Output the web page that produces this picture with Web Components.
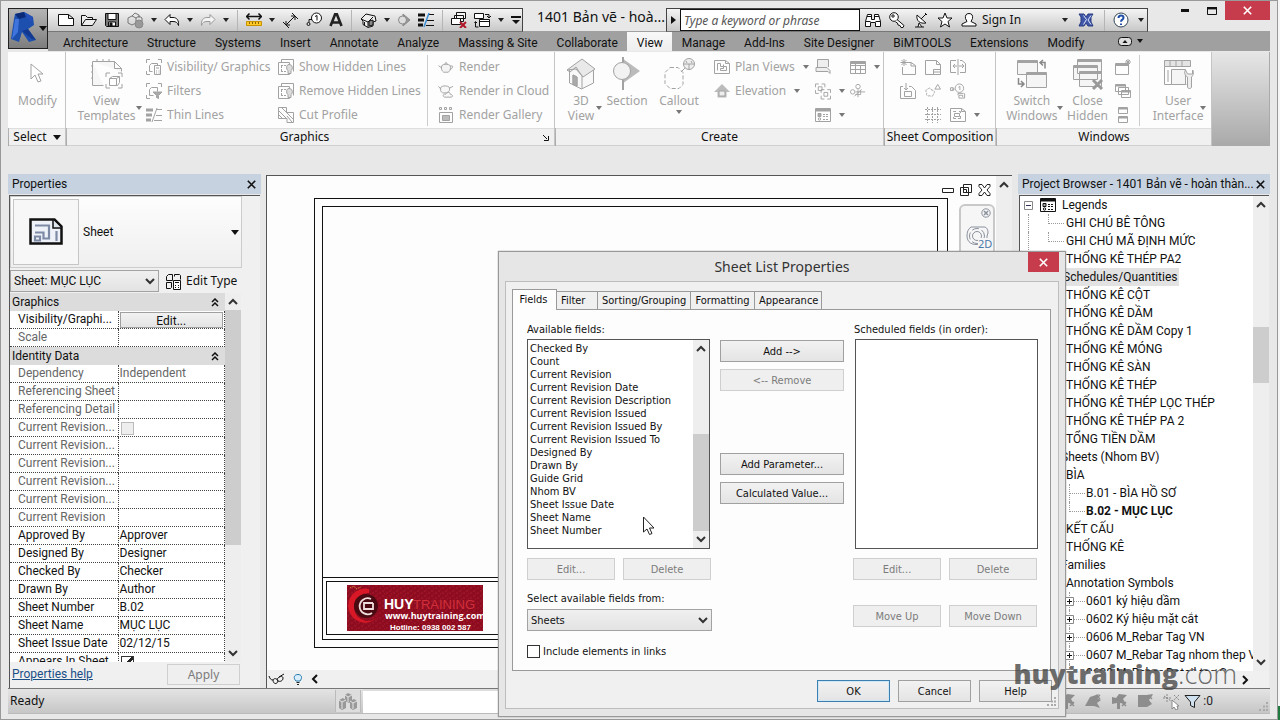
<!DOCTYPE html>
<html lang="vi">
<head>
<meta charset="utf-8">
<title>1401 Bản vẽ - Sheet List Properties</title>
<style>
html,body{margin:0;height:100%;overflow:hidden}
body{font:12px/16px Roboto,"Noto Sans",sans-serif;color:#111;background:#f4f4f4}
</style>
</head>
<body>
<cad-app></cad-app>
<script>
const ICONS = {
  logo:[28,32,'<path d="M4 3l9-2 9 5 1 8-6 4 8 11-7 2-7-10-3 10-8-3 3-20z" fill="#1c4fae" stroke="none"/><path d="M4 3l9-2 2 5-7 2z" fill="#0b2a78" stroke="none"/><path d="M13 1l9 5-2 6-5-6z" fill="#2450b8" stroke="none"/><path d="M4 8l4 0-1 13-6 7z" fill="#3f74dc" stroke="none"/><path d="M11 20l6-2 8 11-4-1z" fill="#12388f" stroke="none"/>'],
  newdoc:[16,16,'<path d="M.5 2.500h10l5 4v7H.5zM10.500 2.500v4h5" fill="#fff"/>'],
  open:[16,16,'<path d="M.5 13.500v-10h4l2 2h5v2M.5 13.500l4-6h11l-4 6z" fill="#eee"/>'],
  save:[16,16,'<path d="M1.500 1.500h13v13h-12l-1-1z" fill="#777"/><path d="M4 1.500h8v6H4z" fill="#fff"/><path d="M4.500 10h7v4h-7z" fill="#fff"/><path d="M6 11h2v3H6z" fill="#111"/>'],
  sync:[17,17,'<path d="M1 6l4-2 4 2v5l-4 2-4-2zM5 4l3-3 4 2 0 3M9 6l3-2 3 2v3M9 11v3" stroke="#777"/><circle cx="12" cy="12" r="4" fill="#999" stroke="#888"/>'],
  undo:[16,14,'<path d="M1 6.500l5-5v3h3c4 0 6 3 5.500 8-1-3-2.500-4-5.500-4H6v3z" fill="#fff"/>'],
  redo:[16,14,'<path d="M15 6.500l-5-5v3H7c-4 0-6 3-5.500 8 1-3 2.500-4 5.500-4h3v3z" fill="#f4f4f4" stroke="#999"/>'],
  measure:[16,14,'<path d="M.5 3.500h15M3.500.5l-3 3 3 3M12.500.5l3 3-3 3" stroke-width="1.500"/><path d="M.5 8.500h15v4H.5z" fill="#ffc928" stroke="#c79200"/><path d="M3.500 9v2M6.500 9v2M9.500 9v2M12.500 9v2" stroke="#8a6400"/>'],
  dim:[17,17,'<path d="M4.500 12.500l8-8M4 9v4h4M9 4h4v4M1 10l6 6M10 1l6 6"/>'],
  tag:[16,16,'<circle cx="10.500" cy="6" r="5" fill="#fff"/><path d="M9 4.500l2-1v5M6 7.500H3v3"/><circle cx="2.500" cy="12" r="1.500"/>'],
  letterA:[14,14,'<path d="M1.500 13L6.200 1h1.600l4.700 12M3.500 9.500h7" stroke="#222" stroke-width="2.600"/>'],
  house:[17,16,'<path d="M1 7l5-5 9 2 1 5-3 1v4l-5 1.500-5-3V9z" fill="#eee"/><path d="M1 7l7 3 5-5M8 10v5M4.500 10v3"/><path d="M9 9l4-1v5l-4 1z" fill="#888"/>'],
  section16:[14,16,'<path d="M6 2l7 6-7 6v-2.500a4 4 0 0 1 0-7z" fill="#999" stroke="#888"/><circle cx="5.500" cy="8" r="4" fill="#ddd" stroke="#888"/>'],
  thin:[16,14,'<path d="M0 2h7M0 7h6M0 12h5" stroke-width="3"/><path d="M10 1.500h6M9 7.500h7M8 12.500h8"/><path d="M11 0L6 14" stroke="#3a8fd6" stroke-width="1.500"/>'],
  thing:[16,14,'<path d="M0 2h7M0 7h6M0 12h5" stroke-width="3"/><path d="M10 1.500h6M10 7.500h6M8 12.500h8M11 0L6 14"/>'],
  closewin:[16,16,'<path d="M5.500.5h9v6h-9zM3.500 3.500h9v6h-9z" fill="#f4f4f4"/><path d="M.5 6.500h9v6h-9z" fill="#fff"/><path d="M9 10l6 6M15 10l-6 6" stroke="#b01827" stroke-width="2"/>'],
  switchwin:[17,17,'<path d="M.5 1.500h9v5h-9zM5.500 7.500h10v7h-10z" fill="#fff"/><path d="M5.500 9.500h10M11 2.500h4v3M13 4l2 2 2-2M1.500 10v5h3M.5 11l1-1.500L3 11"/>'],
  binoc:[16,16,'<path d="M2.500 2.500h4v5h3v-5h4l2 7v5h-5v-4h-5v4h-5v-5zM.5 9.500h5M10.500 9.500h5M2 4.500h5M9 4.500h5" fill="#fff"/>'],
  key:[16,16,'<circle cx="5" cy="5" r="4.300" fill="#fff"/><circle cx="4" cy="4" r="1.200"/><path d="M8 7.500l7 6-1 2h-2l-1-2-2-.5-.5-2-2-1" fill="#fff"/>'],
  dish:[16,16,'<path d="M4 3c-1 6 3 9 9 8zM8 7l5-5M12 1l2 2M2 15h9M5 15l1-4 3 4" fill="#fff"/>'],
  star:[16,16,'<path d="M8 1l2 5h5l-4 3.500 1.500 5.500L8 12l-4.500 3L5 9.500 1 6h5z" fill="#fff"/>'],
  person:[16,16,'<path d="M8 1.500c3 0 4 2 3.500 5l-1.500 3 5 2.500v2H1v-2L6 9.500l-1.500-3C4 3.500 5 1.500 8 1.500z" fill="#fff"/>'],
  xchg:[16,14,'<path d="M1 1h5l2 3 2-3h5l-2 3v5l2 4h-5l-2-3-2 3H1l2-4V4z" fill="#3e55a8" stroke="#283c82"/><path d="M5.500 2.500l3 4-3 5M13 2.500L10 7l3 4.500" stroke="#dfe6ff"/>'],
  help:[16,16,'<circle cx="8" cy="8" r="7" fill="#fff" stroke="#345"/><path d="M5.500 6c0-3.500 5-3.200 5-.3 0 2-2.500 1.800-2.500 4M8 11.500v1.500" stroke="#1f4ea8" stroke-width="2"/>'],
  arrow:[20,24,'<path d="M3 2v15l4-4 3 7 3-1-3-7h5z" fill="#fff"/>'],
  cursor:[13,19,'<path d="M1.500 1v15l3.500-3 2.500 5.500 2.500-1L7.500 12H12z" fill="#fff" stroke="#222"/>'],
  template:[32,32,'<path d="M1.500 3.500h22l7 7v3M1.500 3.500v24h11M23.500 3.500v7h7M6 1v3M12 1v3M18 1v3M0 8h2M0 14h2M0 20h2" fill="#f6f6f6"/><path d="M15 19v-4h4M27 15h4v4M31 26v4h-4M19 30h-4v-4"/><path d="M18.500 20.500l3-2h7v6l-2 3h-8zM18.500 20.500h7v7M25.500 20.500l3-2" fill="#fff"/>'],
  vis:[16,16,'<path d="M.5 4V.5H4M12 .5h3.500V4M.5 12v3.500H4"/><path d="M3.500 6.500l2-2h6v2M3.500 6.500v6h3"/><path d="M8.500 6.500h6v9h-6zM10 9h3M10 12h1M12.500 12h1M10 14h1M12.500 14h1"/>'],
  filter:[16,16,'<path d="M.5 4V.5H4M12 .5h3.500V4M.5 12v3.500H4"/><path d="M3.500 6.500l2-2h6v4M3.500 6.500v6h4"/><path d="M7 9h9l-3.500 3.500v3l-2-1v-2z" fill="#aaa"/>'],
  hidden:[16,16,'<path d="M.5 3.500h11v12H.5zM3.500 3V.5h12v12"/><path d="M3 6.500h6M3 12.500h6M3.500 7v5" stroke-dasharray="2 1"/><path d="M11 5.500c4 0 4 5 2 6v3h-3v-3c-2-1-2-6 1-6z" fill="#ddd"/>'],
  cut:[16,16,'<path d="M.5.5h8v5h7v10H9v-4H.5zM1 4l7 7M1 8l4 4M4 1l5 5M9 6l6 6M9 9l5 6"/>'],
  pot:[17,13,'<path d="M4 4.500c2-2 7-2 9 0 1 3 0 5-2 7H6C4 10 3 8 4 4.500zM4 7L.5 4.500M13 5c3-1 4 1 0 4M7 3l1.500-2L10 3" fill="#f4f4f4"/>'],
  potcloud:[17,15,'<path d="M3 3c2-2 7-2 9 0 1 3 0 4-2 6H5C3 8 2 6 3 3zM3 5L.5 2M12 4l4-2M7 13.500c-3-1-1-4 1-3 1-3 5-3 5 0 3 0 3 3 1 3z" fill="#f8f8f8"/>'],
  gallery:[16,16,'<path d="M1.500.5h2v2h-2zM6.500.5h2v2h-2zM11.500.5h2v2h-2zM1.500 5.500h13v10h-13z"/><path d="M4.500 8.500h7v5h-7z" fill="#bbb"/>'],
  home32:[32,32,'<path d="M4.500 12v13l12 6 12-6V12L18 3z" fill="#f8f8f8"/><path d="M2 12L17 1l13 10-12 8-7-8z" fill="#e9e9e9"/><path d="M2 12l3 2 6-5 6 9v13M8 17l4 2v9l-4-2z"/><path d="M8 17l4 2v9l-4-2z" fill="#aaa"/>'],
  section32:[30,34,'<path d="M10 1l18 13-18 13v-4a9 9 0 0 0 0-17z" fill="#bbb" stroke="none"/><circle cx="10" cy="14" r="8.500" fill="#f2f2f2"/><path d="M11 0v5M11 23v10" stroke-width="2"/>'],
  callout32:[32,34,'<circle cx="26" cy="7" r="5.500" fill="#eee"/><path d="M20.500 7h11M26 7v5M23 4l1 2M28 4l1 2M22 11l-4 4"/><path d="M7 10.500h8l5 5v12l-4 4H7l-5-5v-11z" stroke-dasharray="4 2"/>'],
  plan:[16,14,'<path d="M.5.5h11l4 3v10H.5zM11.500.5v3h4"/><path d="M3.500 10.500v-7h3v3h3v-2M6.500 10.500h6v-4h-3v2h-3z"/>'],
  elev:[16,14,'<path d="M8 0l8 8h-3.500v5.500h-9V8H0z" fill="#bbb" stroke="none"/><path d="M5 7h6v5H5z" fill="#eee"/>'],
  drafting:[16,16,'<path d="M2.500 8V.5h11V8M1 8.500h11l3 3v3l-2-2H1z" fill="#eee"/>'],
  dup:[17,17,'<path d="M.5 4V.5H4M7 .5h3.500V4M.5 7v3.500H4M3.500 3.500h4v4h-4zM6.500 10V6.500H10M13 6.500h3.500V10M6.500 13v3.500H10M16.500 13v3.500H13M9.500 9.500h4v4h-4z"/>'],
  legend:[16,16,'<path d="M.5 1.500h15v13H.5z" fill="#fff"/><path d="M1 3h14" stroke-width="3"/><path d="M3 6.500h3v3H3z" fill="#aaa"/><circle cx="4.500" cy="12" r="1.200"/><path d="M8 7.500h5M8 9.500h5M8 12.500h5" stroke-dasharray="2 1"/>'],
  sched:[16,13,'<path d="M.5.5h15v12H.5zM1 4.500h14M1 8.500h14M5.500 1v11M10.500 5v7"/><path d="M1 2h14" stroke-width="2"/>'],
  scope:[18,16,'<circle cx="9" cy="3" r="2.500"/><circle cx="3" cy="9" r="2.500"/><path d="M9 6v9M6 9h11M6 12h6M12 7v5M5 14l8-8"/>'],
  sheetnew:[16,16,'<path d="M6 3.500h5l4.500 3v9h-13V8M11 3.500v3.500h4.500M4 0v7M.5 3.500h7M1.500 1l5 5M6.500 1l-5 5"/>'],
  titleblk:[16,15,'<path d="M.5.5h11l4 4v10H.5zM11.500.5v4h4M8.500 14V9.500h7M9 12h6"/>'],
  matchl:[16,16,'<path d="M6 1.500H.5v12H6M10 1.500h2l3.500 3v9H10M8 0v16M4 7h3M9 7h4M5 5L3 7l2 2M12 5l2 2-2 2"/>'],
  placev:[16,16,'<path d="M3 3.500H.5v12h15v-8l-4-4H9M4.500 8.500h7v5h-7zM6 0v7M4 5l2 2 2-2"/>'],
  revision:[17,16,'<path d="M3 6c2-2 3-1 4 1 3 0 4 2 2 4 0 3-3 3-4 2-3 1-4-1-3-3-2-2-1-4 1-4z" stroke-dasharray="3 1"/><path d="M13.500 1l3 5h-6z"/>'],
  grid:[16,16,'<path d="M0 2.500h16M0 7.500h16M0 12.500h16M2.500 0v16M7.500 0v16M12.500 0v16" stroke-dasharray="2 1"/>'],
  viewref:[17,17,'<circle cx="10" cy="5" r="4.500"/><path d="M9 4l1.500-1v4M5 6H2M.5 4.500h3v3h-3zM8.500 12.500v-2h6M15.500 10.500v5h-6v-3h4v2"/>'],
  viewport:[16,14,'<path d="M.5.5h11l4 3v10H.5zM11.500.5v3h4"/><path d="M3.500 4v-.5H6M9 3.500h1.500V5M3.500 9v1.500H6M10.500 8v2.500H8M4.500 5.500h5v3h-5z"/>'],
  switch32:[32,32,'<path d="M1.500 2.500h20v14h-20z" fill="#f5f5f5"/><path d="M10.500 14.500h20v15h-20z" fill="#f5f5f5"/><path d="M1.500 4h20M10.500 16h20" stroke-width="2"/><path d="M24 4.500h5v6M27 2l-3 2.500 3 3M2.500 20v6h5M5 23l3 3-3 3" stroke="#888" stroke-width="1.500"/>'],
  close32:[32,32,'<path d="M5.500 1.500h24v14h-24zM1.500 7.500h24v14h-24zM7.500 13.500h22v15h-22z" fill="#f5f5f5"/><path d="M5.500 3h24M1.500 9h24M7.500 15h22" stroke-width="2"/><path d="M21 22l9 9M30 22l-9 9" stroke="#999" stroke-width="3"/>'],
  newwin:[16,16,'<path d="M.5 4.500h13v11H.5z"/><path d="M1 6h12" stroke-width="2"/><path d="M13 0v6M10 3h6M11 1l4 4M15 1l-4 4"/>'],
  cascade:[16,16,'<path d="M.5 1.500h10v7H.5zM3.500 4.500h10v7h-10zM6.500 7.500h9v7h-9z" fill="#fff"/><path d="M1 2.500h9M7 8.500h8" stroke-width="2"/>'],
  tile:[16,16,'<path d="M3.500.5h9v6h-9zM3.500 9.500h9v6h-9z"/><path d="M4 1.500h8M4 10.500h8" stroke-width="2"/>'],
  ui32:[32,32,'<path d="M2.500 2.500h26v6h-26z" fill="#e4e4e4"/><path d="M8 2v6M14 2v6M20 2v6M2.500 8.500v18h22M6 12v12"/><path d="M9.500 11.500h14v15h-14z" fill="#f5f5f5"/><path d="M23.500 12c-2 3 0 6 2 7v10c0 2 4 2 4 0V19c2-2 3-5 1-7v4h-5z" fill="#eee"/>'],
  sheet32:[34,28,'<path d="M1.500 1.500h24l7 7v17h-31z" fill="#eef1f7" stroke="#111" stroke-width="2.500"/><path d="M24 2v8h8" stroke="#111" stroke-width="1.500" fill="#dfe6ee"/><path d="M6 7.500h14v13H14.500v-6H6M6 18.500h5v4H6zM27.500 13v10" stroke="#7d8aa5" stroke-width="2.200"/>'],
  edittype:[17,17,'<path d="M1.500 3.500l2-2h4v6h-6zM9.500 3.500v-2h5l1 1v4M1.500 9.500h5v5l-1 1h-4z"/><path d="M8.500 7.500h7v9h-7z" fill="#fff"/><path d="M10 9.500h4M10 12.500h1M13 12.500h1M10 14.500h1M13 14.500h1"/>'],
  glasses:[17,12,'<path d="M1 3c1 3 2 4 4 4 0 4 4 5 5 1 2 1 5 0 5-3 0-2-3-2-5 0-1 1-1 2 0 3M5 7c1-2 4-2 5 1M11 4l5-3"/>'],
  bulb:[10,14,'<path d="M3 9C0 6 1 2.500 5 2.500S9.500 6 7 9z" fill="#d9efff" stroke="#27a"/><path d="M3.500 10.500h3M4 12.500h2" stroke="#222"/>'],
  wheel:[28,28,'<path d="M6 3h13c3 0 4 3 4 6l-1 3v8h-7C7 22 2 18 2 12c0-4 1-7 4-9z"/><circle cx="12" cy="12" r="4.500"/><circle cx="12" cy="12" r="7.500" stroke-dasharray="7 3"/>'],
  sets:[20,18,'<path d="M1 8l4-2 3 2v8l-4 2-3-2zM7 3l3-2 4 2v6l-3 2-4-2zM12 9l4-2 3 2v7l-4 2-3-2z" fill="#999" stroke="none"/><path d="M1 8l3 2 4-2M7 3l3 2 4-2M12 9l3 2 4-2M4 10v7M10 5v5M15 11v6" stroke="#e4e4e4"/>'],
  funnel:[17,15,'<path d="M1 1.500h15L10.500 8v5.500l-4-2V8z" fill="#cfe0ee"/>'],
  plane:[18,18,'<path d="M1 14l5-9 9-3-2 4 4 2-4 3 3 5-6-2z" fill="#8d8d8d" stroke="none"/><path d="M12 3l4 4M16 3l-4 4" stroke="#8d8d8d" stroke-width="1.500"/>'],
  pin:[18,18,'<path d="M2 5l4 1 3-4 8 1-4 4 3 5-6-1v6h-3v-6l-5 1z" fill="#8d8d8d" stroke="none"/><path d="M12 10l4 4M16 10l-4 4" stroke="#8d8d8d" stroke-width="1.500"/>'],
  face:[18,18,'<path d="M2 3h9l6-1-4 6 3 4-5 3H2z" fill="#8d8d8d" stroke="none"/><path d="M12 3l4 4M16 3l-4 4" stroke="#8d8d8d" stroke-width="1.500"/>'],
  drag:[18,18,'<path d="M1 6h9M5 2v9M2 4l7 5M12 3l5 5M17 3l-5 5" stroke-dasharray="2 1"/><path d="M10 8v9l2-2 2 3 2-1-1-3h2z" fill="#fff"/>'],
  down:[8,5,'<path d="M0 0h8L4 5z" fill="currentColor" stroke="none"/>'],
  small:[6,4,'<path d="M0 0h6L3 4z" fill="currentColor" stroke="none"/>'],
  right:[5,8,'<path d="M0 0v8l5-4z" fill="currentColor" stroke="none"/>'],
  chev:[10,7,'<path d="M1 1l4 4 4-4" stroke-width="2"/>'],
  chevup:[10,7,'<path d="M1 6l4-4 4 4" stroke-width="2"/>'],
  chevl:[7,10,'<path d="M6 1L2 5l4 4" stroke-width="2"/>'],
  chevr:[7,10,'<path d="M1 1l4 4-4 4" stroke-width="2"/>'],
  dbl:[8,9,'<path d="M1 4l3-3 3 3M1 8l3-3 3 3" stroke-width="1.500"/>'],
  x:[9,9,'<path d="M.8.8l7.400 7.400M8.200.8L.8 8.200" stroke-width="1.600"/>'],
  launch:[7,7,'<path d="M1 1l4 4M6.500 2v4.500H2"/>'],
  qat:[10,8,'<path d="M0 1h10" stroke-width="2"/><path d="M1 4h8L5 8z" fill="currentColor" stroke="none"/>'],
  pill:[14,9,'<rect x=".5" y=".5" width="13" height="8" rx="3" fill="#ddd"/><path d="M4.500 6L7 3l2.500 3z" fill="currentColor" stroke="none"/>'],
  min:[12,5,'<path d="M.5.5h11v4H.5z" fill="#fff"/>'],
  restore:[12,12,'<path d="M3.500.5h8v8h-8zM.5 3.500h8v8h-8z" fill="#fff"/><path d="M3.500 5.500h3v3h-3z"/>'],
  closeo:[13,12,'<path d="M1 .5h3L6.500 4 9 .5h3v2L9 6l3 3.500v2H9L6.500 8 4 11.500H1v-2L4 6 1 2.500z" fill="#fff"/>'],
  circx:[10,10,'<circle cx="5" cy="5" r="4.200"/><path d="M3 3l4 4M7 3l-4 4" stroke-width="1.500"/>'],
  max:[10,8,'<path d="M.5 1h9v6.500h-9z"/><path d="M0 1.200h10" stroke-width="2.400"/>'],
  minus:[8,3,'<path d="M0 1.500h8" stroke-width="3"/>'],
  grip:[9,9,'<path d="M7 0h2v2H7zM4 3.500h2v2H4zM7 3.500h2v2H7zM0 7h2v2H0zM4 7h2v2H4zM7 7h2v2H7z" fill="currentColor" stroke="none"/>'],
  plus:[9,9,'<path d="M.5.500h8v8h-8z" fill="#fff" stroke="#888"/><path d="M2 4.500h5M4.500 2v5" stroke="#111"/>'],
  boxminus:[9,9,'<path d="M.5.500h8v8h-8z" fill="#fff" stroke="#888"/><path d="M2 4.500h5" stroke="#335"/>']
};
/* Small base: each element supplies its styles and a markup function. */
function element(name, css, markup){
  customElements.define(name, class extends HTMLElement{
    constructor(){ super(); this.attachShadow({mode:'open'}); }
    connectedCallback(){
      if(this.shadowRoot.firstChild) return;
      const t=document.createElement('template');
      t.innerHTML='<style>*{box-sizing:border-box}:host{box-sizing:border-box}'+css+'</style>'+(typeof markup==='function'?markup(this):markup);
      this.shadowRoot.append(t.content.cloneNode(true));
    }
  });
}
element('tool-icon',':host{display:inline-flex;flex:none;align-items:center;justify-content:center}svg{display:block}',h=>{
  const [w,ht,body]=ICONS[h.getAttribute('name')];
  return `<svg width="${w}" height="${ht}" viewBox="0 0 ${w} ${ht}" fill="none" stroke="currentColor" aria-hidden="true">${body}</svg>`;
});
const ic=(n,a='')=>`<tool-icon name="${n}" ${a}></tool-icon>`;

element('push-button',`:host{display:block;height:22px}
button{display:block;width:100%;height:100%;margin:0;padding:0;font:inherit;color:#111;border:1px solid #a0a0a0;background:linear-gradient(#f2f2f2,#e4e4e4)}
:host([primary]) button{border:1px solid #3c7fb1;box-shadow:inset 0 0 0 1px #cfe6f4}
button:disabled{color:#7c7c7c;border-color:#cfcfcf;background:#efefef}`,
h=>`<button type="button"${h.hasAttribute('off')?' disabled':''}><slot></slot></button>`);

element('drop-down',`:host{display:block;position:relative;height:22px}
select{appearance:none;width:100%;height:100%;font:inherit;color:#111;border:1px solid #a3a3a3;border-radius:0;margin:0;padding:0 18px 0 3px;background:linear-gradient(#f0f0f0,#e3e3e3)}
tool-icon{position:absolute;right:4px;top:8px;color:#333;pointer-events:none}`,
h=>`<select aria-label="${h.getAttribute('label')}"><option>${h.getAttribute('value')}</option></select>${ic('chev')}`);

element('scroll-bar',`:host{display:flex;flex-direction:column;width:16px;flex:none;background:#eee;color:#333}
tool-icon{height:17px}.track{flex:1;min-height:0}.thumb{margin-top:var(--before,0);height:var(--thumb,0);background:#cdcdcd}`,
`${ic('chevup')}<div class="track"><div class="thumb"></div></div>${ic('chev')}`);

element('ribbon-button',`:host{display:block;color:#a2a2a2;font-family:"Noto Sans",sans-serif}
button{all:unset;box-sizing:border-box;cursor:default;position:relative;width:100%;display:flex}
.small button{height:24px;align-items:center;gap:5px;white-space:nowrap}
.small .i{width:16px}
.a{color:#777}
.small .a{margin-left:3px}
.large button{flex-direction:column;align-items:center;padding-top:5px;text-align:center;line-height:15px}
.large .i{height:34px;margin-bottom:2px}
.large .a{position:absolute;right:4px;top:54px}
:host([under]) .large .a{position:static;margin-top:2px}`,
h=>`<div class="${h.hasAttribute('large')?'large':'small'}"><button type="button" disabled aria-label="${h.getAttribute('icon')}">${ic(h.getAttribute('icon'),'class="i"')}${h.textContent.trim()?'<span><slot></slot></span>':''}${h.hasAttribute('arrow')?ic('small','class="a"'):''}</button></div>`);
element('ribbon-panel',`:host{display:flex;flex-direction:column;border-right:1px solid #c4c4c4;flex:none}
.b{flex:1;display:flex;background:#fdfdfd;padding:3px 1px 0}
.t{display:flex;align-items:center;justify-content:center;height:18px;background:#f0f0f0;border-top:1px solid #ddd;border-bottom:1px solid #d0d0d0;margin-left:1px;gap:6px;position:relative;font-family:"Noto Sans",sans-serif}
:host([launch]) .t{padding-right:12px}
.t tool-icon{position:absolute;right:5px}`,
h=>`<div class="b"><slot></slot></div><div class="t"><slot name="title"></slot>${h.hasAttribute('launch')?ic('launch'):''}</div>`);
element('ribbon-bar',`:host{display:flex;height:94px;background:linear-gradient(#e6e6e6,#a9a9a9);border-right:1px solid #aaa}
.col{display:block}.sep{width:1px;background:#ccc;margin-bottom:2px}
ribbon-button[large]{margin-top:-3px}`,`
<ribbon-panel style="width:58px"><ribbon-button large icon="arrow" style="width:56px;padding-left:2px">Modify</ribbon-button><span slot="title">Select</span><tool-icon slot="title" name="down"></tool-icon></ribbon-panel>
<ribbon-panel launch style="width:489px"><ribbon-button large arrow icon="template" style="width:79px">View<br>Templates</ribbon-button>
<div class="col" style="width:132px"><ribbon-button icon="vis">Visibility/ Graphics</ribbon-button><ribbon-button icon="filter">Filters</ribbon-button><ribbon-button icon="thing">Thin Lines</ribbon-button></div>
<div class="col" style="width:149px"><ribbon-button icon="hidden">Show Hidden Lines</ribbon-button><ribbon-button icon="hidden">Remove Hidden Lines</ribbon-button><ribbon-button icon="cut">Cut Profile</ribbon-button></div><div class="sep"></div>
<div class="col" style="padding-left:10px"><ribbon-button icon="pot">Render</ribbon-button><ribbon-button icon="potcloud">Render in Cloud</ribbon-button><ribbon-button icon="gallery">Render Gallery</ribbon-button></div><span slot="title">Graphics</span></ribbon-panel>
<ribbon-panel style="width:329px"><ribbon-button large arrow icon="home32" style="width:50px">3D<br>View</ribbon-button><ribbon-button large icon="section32" style="width:42px">Section</ribbon-button><ribbon-button large under arrow icon="callout32" style="width:62px">Callout</ribbon-button>
<div class="col" style="width:105px;padding-left:4px"><ribbon-button arrow icon="plan">Plan Views</ribbon-button><ribbon-button arrow icon="elev">Elevation</ribbon-button></div>
<div class="col" style="width:35px"><ribbon-button icon="drafting"></ribbon-button><ribbon-button arrow icon="dup"></ribbon-button><ribbon-button arrow icon="legend"></ribbon-button></div>
<div class="col"><ribbon-button arrow icon="sched"></ribbon-button><ribbon-button icon="scope"></ribbon-button></div><span slot="title">Create</span></ribbon-panel>
<ribbon-panel style="width:112px"><div class="col" style="width:40px;padding-left:15px"><ribbon-button icon="sheetnew"></ribbon-button><ribbon-button icon="placev"></ribbon-button></div><div class="col" style="width:25px"><ribbon-button icon="titleblk"></ribbon-button><ribbon-button icon="revision"></ribbon-button><ribbon-button icon="grid"></ribbon-button></div><div class="col"><ribbon-button icon="matchl"></ribbon-button><ribbon-button icon="viewref"></ribbon-button><ribbon-button arrow icon="viewport"></ribbon-button></div><span slot="title">Sheet Composition</span></ribbon-panel>
<ribbon-panel style="width:216px"><ribbon-button large arrow icon="switch32" style="width:70px">Switch<br>Windows</ribbon-button><ribbon-button large icon="close32" style="width:42px">Close<br>Hidden</ribbon-button><div class="col" style="width:31px;padding-left:7px"><ribbon-button icon="newwin"></ribbon-button><ribbon-button icon="cascade"></ribbon-button><ribbon-button icon="tile"></ribbon-button></div><div class="sep"></div><ribbon-button large arrow icon="ui32" style="width:70px;padding-left:6px">User<br>Interface</ribbon-button><span slot="title">Windows</span></ribbon-panel>`);

element('app-header',`:host{display:grid;grid-template-columns:40px 1fr;grid-template-rows:31px 20px}
.logo{grid-row:1/3;margin-top:8px;border:1px solid #222;background:linear-gradient(#b5b5b5,#7d7d7d);display:flex;align-items:flex-start;padding:2px 0 0 2px;height:41px;z-index:1}
.logo tool-icon:last-child{margin-top:15px}
.top{display:flex;position:relative;padding-top:8px}
.bar{display:flex;align-items:center;border:1px solid #444;border-bottom-color:#777;border-left:0;background:linear-gradient(#f4f4f4,#c8c8c8);height:24px;flex:none}
.qat{width:475px;padding-left:10px;gap:7px}.qat i,.info i{width:1px;height:21px;background:#b5b5b5}.qat i{margin:0 1px}
.dd{color:#222;width:6px}
.t{width:143px;font:14px/18px "Noto Sans",sans-serif;white-space:nowrap;padding-left:14px;flex:none}
.info{border-left:1px solid #444;width:482px}
.go{width:13px}input{width:180px;height:22px;margin:0;padding:0 3px;font:italic 12px "Noto Sans",sans-serif;border:1px solid #111;border-radius:0;background:#fff}
input::placeholder{color:#555;opacity:1}
.wb{margin-left:auto;display:flex;margin-top:-7px}
.wb button{all:unset;height:19px;display:flex;align-items:center;justify-content:center;width:27px}
.wb button:last-child{width:45px;background:#c73c4d;color:#fff}
.tabs{background:#a0a0a0;display:flex;align-items:stretch;padding-left:5px;overflow:hidden}
.tabs a{color:#111;text-decoration:none;line-height:18px;padding:2px 9px 0 10px;white-space:nowrap;margin-top:1px}
.tabs a.on{background:linear-gradient(#f8f8f8,#eee)}
.tabs tool-icon{margin-left:25px;margin-right:-20px}`,`
<div class="logo">${ic('logo')}${ic('down')}</div>
<div class="top"><div class="bar qat">${ic('newdoc')}${ic('open')}${ic('save')}${ic('sync')}${ic('small','class="dd"')}${ic('undo')}${ic('small','class="dd"')}${ic('redo')}${ic('small','class="dd"')}<i></i>${ic('measure')}${ic('small','class="dd"')}${ic('dim')}${ic('tag')}${ic('letterA')}<i></i>${ic('house')}${ic('small','class="dd"')}${ic('section16')}${ic('thin')}<i></i>${ic('closewin')}${ic('switchwin')}${ic('small','class="dd"')}${ic('qat')}</div>
<div class="t">1401 Bản vẽ - hoà...</div>
<div class="bar info">${ic('right','class="go"')}<input aria-label="Search" placeholder="Type a keyword or phrase">
${ic('binoc','style="margin-left:5px"')}${ic('key','style="margin-left:8px"')}${ic('dish','style="margin-left:8px"')}${ic('star','style="margin-left:8px"')}${ic('person','style="margin-left:8px"')}<span style="margin-left:5px;font-family:'Noto Sans',sans-serif">Sign In</span>${ic('small','class="dd" style="margin-left:auto"')}${ic('xchg','style="margin:0 10px"')}<i></i>${ic('help','style="margin:0 9px 0 8px"')}${ic('small','class="dd" style="margin-right:3px"')}</div>
<div class="wb"><button aria-label="Minimize">${ic('minus')}</button><button aria-label="Maximize">${ic('max')}</button><button aria-label="Close">${ic('x')}</button></div></div>
<nav class="tabs">${['Architecture','Structure','Systems','Insert','Annotate','Analyze','Massing & Site','Collaborate','View','Manage','Add-Ins','Site Designer','BiMTOOLS','Extensions','Modify'].map(t=>`<a href="#"${t=='View'?' class="on"':''}>${t.replace('&','&amp;')}</a>`).join('')}${ic('pill')}${ic('small')}</nav>`);

element('palette-title',`:host{display:flex;height:20px;align-items:center;background:#c6d2e0;padding:0 5px 0 4px;justify-content:space-between;white-space:nowrap}span{min-width:0}`,`<span><slot></slot></span>${ic('x')}`);

const props=[['Scale',''],0,['Dependency','Independent'],['Referencing Sheet',''],['Referencing Detail',''],['Current Revision...','box'],['Current Revision...',''],['Current Revision...',''],['Current Revision...',''],['Current Revision...',''],['Current Revision',''],['Approved By','Approver'],['Designed By','Designer'],['Checked By','Checker'],['Drawn By','Author'],['Sheet Number','B.02'],['Sheet Name','MỤC LỤC'],['Sheet Issue Date','02/12/15'],['Appears In Sheet','check']];
element('properties-palette',`:host{display:flex;flex-direction:column;width:253px;flex:none;min-height:0}
.in{flex:1;display:flex;flex-direction:column;margin:1px 1px 0;border:solid #555;border-width:1px 0 0 1px;background:#f0f0f0;min-height:0}
.type{display:flex;align-items:center;height:72px;margin:0 18px 0 0;padding:2px;border:1px solid #ccc;background:linear-gradient(#fdfdfd,#efefef);flex:none}
.pic{width:66px;height:66px;border:1px solid #c6c6c6;background:#f7f7f7;display:flex;align-items:center;justify-content:center;margin-right:4px}
.type>tool-icon{margin-left:auto}
.sel{display:flex;align-items:center;padding:2px 0 1px;gap:6px;flex:none}.sel drop-down{width:149px}
.sel button{all:unset;display:flex;gap:4px;align-items:center;font-family:"Noto Sans",sans-serif}
.grid{flex:1;display:flex;min-height:0}
.clip{width:215px;overflow:hidden;background:#fff}
table{border-collapse:separate;border-spacing:0;width:215px;table-layout:fixed}
td,th{height:18px;padding:0;line-height:17px;font-weight:400;text-align:left;white-space:nowrap;overflow:hidden;border-bottom:1px dotted #444}
td:first-child{width:107px;padding-left:8px}td+td{border-left:1px dotted #444;border-right:1px dotted #444;padding-left:1px}
th{background:#dcdcdc;border:0;padding-left:2px}th div{display:flex;justify-content:space-between;align-items:center;padding-right:6px}
.g{color:#666}push-button{height:16px;margin-right:1px}
input{display:block;width:13px;height:13px;margin:1px 0 0 1px;appearance:none;border:1px solid #bbb;background:#eee}
input:checked{border-color:#333;background:#fff linear-gradient(135deg,transparent 45%,#222 45%,#222 60%,transparent 60%)}
.foot{height:26px;display:flex;justify-content:space-between;align-items:center;padding:0 19px 2px 2px;flex:none}
a{color:#1a4f86}.foot push-button{width:73px;height:21px;font:12px "Noto Sans",sans-serif}`,`
<palette-title>Properties</palette-title>
<div class="in"><div class="type"><div class="pic">${ic('sheet32')}</div>Sheet${ic('down')}</div>
<div class="sel"><drop-down label="Instance" value="Sheet: MỤC LỤC"></drop-down><button type="button">${ic('edittype')}Edit Type</button></div>
<div class="grid"><div class="clip"><table>
<tbody><tr><th colspan="2"><div>Graphics${ic('dbl')}</div></th></tr><tr><td>Visibility/Graphi...</td><td><push-button>Edit...</push-button></td></tr>
${props.map((r,i)=>r?`<tr class="${i<11?'g':''}"><td>${r[0]}</td><td>${r[1]=='box'?'<input type="checkbox" disabled aria-label="Current Revision Issued">':r[1]=='check'?'<input type="checkbox" checked aria-label="Appears In Sheet List">':r[1]}</td></tr>`:`<tr><th colspan="2"><div>Identity Data${ic('dbl')}</div></th></tr>`).join('')}</tbody></table></div><scroll-bar style="--before:0px;--thumb:235px"></scroll-bar></div>
<div class="foot"><a href="#">Properties help</a><push-button off>Apply</push-button></div></div>`);

element('logo-banner',`:host{display:block;width:136px;height:46px}svg{display:block}`,`<svg width="136" height="46" viewBox="0 0 136 46" font-family="Liberation Sans, sans-serif"><defs><pattern id="p" width="7" height="5" patternUnits="userSpaceOnUse"><path d="M0 1h2M4 3h2M2 4h1" stroke="#a81a2e"/></pattern></defs><rect width="136" height="46" fill="#8e0c20"/><rect width="136" height="46" fill="url(#p)"/><path d="M22 4A17 17 0 1 0 34 27 14 14 0 1 1 22 8z" fill="#d81826"/><circle cx="19" cy="21" r="12" fill="#4a0a12"/><path d="M26 18v6h-9v-6h9M24 14a8 8 0 1 0 1 14" fill="none" stroke="#f0dede" stroke-width="1.800"/><path d="M3 3l4-2 2 3 5-2" stroke="#e0a040" fill="none" stroke-dasharray="1 1"/><text x="37" y="24" font-size="14" font-weight="700" fill="#fff">HUY</text><text x="66" y="24" font-size="13" fill="#d0303a">TRAINING</text><text x="38" y="34" font-size="9" font-weight="700" fill="#fff" font-family="Open Sans, sans-serif">www.huytraining.com</text><text x="43" y="45" font-size="8" font-weight="700" fill="#fff">Hotline: 0938 002 587</text></svg>`);

element('drawing-view',`:host{display:flex;flex-direction:column;flex:1;min-width:0;margin:1px 6px 0 5px;border:solid #555;border-width:1px 0 0 1px;position:relative}
.m{flex:1;display:flex;min-height:0}.page{flex:1;background:#fdfdfd;padding:22px 48px 22px 47px;display:flex}
.s{flex:1;border:1px solid #111;padding:7px 9px 7px 7px;display:flex}.s2{flex:1;border:1px solid #111;display:flex;flex-direction:column}
.area{flex:1}.tb{height:62px;border-top:1px solid #111;padding:3px}.tb div{height:54px;border:1px solid #111;padding:3px 20px}
.h{height:18px;background:#f0f0f0;display:flex;align-items:center;gap:8px;padding-left:1px}
.ctl{position:absolute;right:21px;top:8px;display:flex;align-items:center;gap:6px;color:#222}
.nav{position:absolute;right:17px;top:28px;width:36px;height:90px;border:2px solid #c8c8c8;border-radius:6px;background:#f6f6f6;color:#8a909c}
.nav .c{position:absolute;right:2px;top:2px}.nav .w{position:absolute;left:4px;top:18px}.nav b{position:absolute;left:17px;top:32px;font:11px/11px "Noto Sans",sans-serif;color:#4a78a8;background:#f6f6f6}`,`
<div class="m"><div class="page"><div class="s"><div class="s2"><div class="area"></div><div class="tb"><div><logo-banner></logo-banner></div></div></div></div></div><scroll-bar></scroll-bar></div>
<div class="h">${ic('glasses')}${ic('bulb')}${ic('chevl')}</div>
<div class="ctl">${ic('min')}${ic('restore')}${ic('closeo')}</div><div class="nav">${ic('circx','class="c"')}${ic('wheel','class="w"')}<b>2D</b></div>`);

element('tree-row',`:host{display:flex;height:18px;align-items:center;white-space:nowrap;padding-left:46px;position:relative}
:host([l="0"]){padding-left:4px;gap:7px}:host([l="0"]) span{margin-left:-1px}:host([l="s"]){padding-left:41px}:host([l="s"][sel]) span{background:#e2e2e2;padding:1px 2px}
:host([l="2"]){padding-left:66px}:host([b]){font-weight:700}
:host([l="2"])::before,:host([dash])::before{content:"";position:absolute;left:49px;width:15px;top:0;height:9px;border:dotted #999;border-width:0 0 1px 1px}
:host([l="2"])::after{content:"";position:absolute;left:49px;top:9px;height:9px;border-left:1px dotted #999}:host([last])::after{display:none}
:host([dash])::before{left:28px}
:host([dash])::after{content:"";position:absolute;left:8px;top:0;height:18px;border-left:1px dotted #999}
.e{position:absolute;left:45px;z-index:1}`,
h=>(h.getAttribute('l')=='0'?ic('boxminus')+ic('legend'):'')+(h.hasAttribute('exp')?ic('plus','class="e"'):'')+'<span><slot></slot></span>');
element('project-browser',`:host{display:flex;flex-direction:column;width:252px;flex:none;min-height:0}
.in{flex:1;display:flex;margin:1px 1px 0 1px;border:solid #555;border-width:1px 0 0 1px;background:#fff;min-height:0}
.tree{flex:1;overflow:hidden;min-width:0}.l{display:flex;flex-direction:column;flex:1;min-width:0}.h{height:17px;background:#f0f0f0;display:flex;align-items:center;justify-content:flex-end;padding-right:4px}
.r{display:flex;flex-direction:column;background:#f0f0f0}scroll-bar{flex:1;margin-bottom:17px}`,`
<palette-title>Project Browser - 1401 Bản vẽ - hoàn thàn...</palette-title>
<div class="in"><div class="l"><div class="tree">
<tree-row l="0">Legends</tree-row><tree-row dash>GHI CHÚ BÊ TÔNG</tree-row><tree-row dash>GHI CHÚ MÃ ĐỊNH MỨC</tree-row><tree-row>THỐNG KÊ THÉP PA2</tree-row><tree-row l="s" sel>Schedules/Quantities</tree-row>
${['CỘT','DẦM','DẦM Copy 1','MÓNG','SÀN','THÉP','THÉP LỌC THÉP','THÉP PA 2'].map(t=>`<tree-row>THỐNG KÊ ${t}</tree-row>`).join('')}
<tree-row>TỔNG TIỀN DẦM</tree-row><tree-row l="s">Sheets (Nhom BV)</tree-row><tree-row>BÌA</tree-row><tree-row l="2">B.01 - BÌA HỒ SƠ</tree-row><tree-row l="2" b last>B.02 - MỤC LỤC</tree-row><tree-row>KẾT CẤU</tree-row><tree-row>THỐNG KÊ</tree-row><tree-row l="s">Families</tree-row><tree-row>Annotation Symbols</tree-row>
<tree-row l="2" exp>0601 ký hiệu dầm</tree-row><tree-row l="2" exp>0602 Ký hiệu mặt cắt</tree-row><tree-row l="2" exp>0606 M_Rebar Tag VN</tree-row><tree-row l="2" exp>0607 M_Rebar Tag nhom thep V</tree-row><tree-row l="2" exp>0608 M_Rebar Detail tag S</tree-row>
</div><div class="h">${ic('chevr')}</div></div><div class="r"><scroll-bar style="--before:114px;--thumb:56px"></scroll-bar></div></div>`);

element('status-bar',`:host{display:flex;align-items:center;height:26px;border-top:1px solid #777;border-bottom:1px solid #bbb;background:linear-gradient(#e4e4e4,#c6c6c6);padding:0 2px 0 2px;flex:none}
.rd{width:325px;font-family:"Noto Sans",sans-serif}.ws{width:26px;height:22px;border:solid #bbb;border-width:0 1px;background:#ddd;color:#888;margin-right:2px}.f{flex:1;align-self:stretch;background:#fff;border-top:2px solid #ddd}
.i{display:flex;gap:8px;color:#888;margin:0 4px}.n{color:#222;margin-right:46px;display:flex;align-items:center;gap:2px}.g{color:#aaa;align-self:flex-end;padding-bottom:2px}`,`
<span class="rd">Ready</span><span class="ws">${ic('sets','style="margin:2px"')}</span><span class="f"></span><span class="i">${ic('pin')}${ic('plane')}${ic('pin')}${ic('face')}${ic('drag')}</span><span class="n">${ic('funnel')}:0</span>${ic('grip','class="g"')}`);

const fields=['Checked By','Count','Current Revision','Current Revision Date','Current Revision Description','Current Revision Issued','Current Revision Issued By','Current Revision Issued To','Designed By','Drawn By','Guide Grid','Nhom BV','Sheet Issue Date','Sheet Name','Sheet Number'];
element('sheet-list-dialog',`:host{display:flex;flex-direction:column;width:568px;height:466px;border:1px solid #999;background:#e6e6e6;padding:0 6px 7px;font:11px/13px "DejaVu Sans Condensed","Noto Sans",sans-serif}
header{height:29px;display:flex;justify-content:center;align-items:center;position:relative;font:14px/18px "Noto Sans",sans-serif;color:#333}
header button{all:unset;position:absolute;right:0;top:0;width:31px;height:20px;background:#c73c4d;color:#fff;display:flex;align-items:center;justify-content:center}
.in{flex:1;border:1px solid #bdbdbd;background:#f0f0f0;padding:7px 6px 6px;display:flex;flex-direction:column;position:relative}
.tabs{display:flex;align-items:flex-end;height:21px;margin-bottom:-1px;z-index:1}
.tabs button{font:inherit;margin:0;padding:0 4px;height:19px;border:1px solid #9a9a9a;border-left:0;background:#f0f0f0;color:#111}
.tabs button[aria-selected=true]{height:21px;background:#fdfdfd;border-bottom:0;border-left:1px solid #9a9a9a;padding:0 6px 1px 4px}
.panel{flex:1;border:1px solid #9a9a9a;background:#fdfdfd;margin-right:1px;padding:12px 12px 0 14px;display:grid;grid-template-columns:185px 124px 185px;column-gap:8px}
label,.lab{display:block;height:17px;padding-top:1px}
.list{display:flex;height:210px;border:1px solid #555;width:183px;background:#fff}
select.lb{flex:1;appearance:none;border:0;outline:0;margin:0;padding:2px 0;background:none;font:inherit;overflow:hidden;color:#111}
option{padding:0 2px;min-height:13px;height:13px;line-height:13px}
.two{display:grid;grid-template-columns:88px 88px;gap:8px;margin:9px 0 0}
.right{padding-left:1px}.right .list{margin-left:2px}.right label{padding-left:1px}
.mid{padding-top:18px}.mid push-button{margin-bottom:7px}
.ck{display:flex;align-items:center;gap:3px;padding:0;margin-top:12px;white-space:nowrap}.ck input{appearance:none;width:13px;height:13px;border:1px solid #333;margin:0;background:#fff}
.ok{display:flex;justify-content:flex-end;gap:8px;padding-top:9px}.ok push-button{width:73px}
.grip{position:absolute;right:2px;bottom:2px;color:#aaa}`,`
<header>Sheet List Properties<button aria-label="Close">${ic('x')}</button></header>
<div class="in"><div class="tabs" role="tablist"><button role="tab" aria-selected="true" style="width:45px">Fields</button><button role="tab" style="width:41px;text-align:left">Filter</button><button role="tab" style="width:93px">Sorting/Grouping</button><button role="tab" style="width:64px">Formatting</button><button role="tab" style="width:67px">Appearance</button></div>
<div class="panel">
<div><label for="av">Available fields:</label><div class="list"><select class="lb" id="av" size="15">${fields.map(f=>`<option>${f}</option>`).join('')}</select><scroll-bar style="--before:77px;--thumb:97px"></scroll-bar></div>
<div class="two"><push-button off>Edit...</push-button><push-button off>Delete</push-button></div>
<span class="lab" style="margin-top:11px">Select available fields from:</span><drop-down label="Select available fields from:" value="Sheets" style="margin-top:1px"></drop-down>
<label class="ck"><input type="checkbox">Include elements in links</label></div>
<div class="mid"><push-button>Add --&gt;</push-button><push-button off>&lt;-- Remove</push-button><div style="height:55px"></div><push-button>Add Parameter...</push-button><push-button>Calculated Value...</push-button></div>
<div class="right"><label for="sc">Scheduled fields (in order):</label><div class="list"><select class="lb" id="sc" size="15"></select></div>
<div class="two"><push-button off>Edit...</push-button><push-button off>Delete</push-button></div><div class="two" style="margin-top:25px"><push-button off>Move Up</push-button><push-button off>Move Down</push-button></div></div>
</div><div class="ok"><push-button primary>OK</push-button><push-button>Cancel</push-button><push-button>Help</push-button></div>${ic('grip','class="grip"')}</div>`);

element('cad-app',`:host{display:flex;height:100vh;position:relative}
.win{flex:1;min-width:0;display:flex;flex-direction:column;background:#e8e8e8;border:1px solid #999;padding:0 7px 5px 7px}
.desk{width:2px;flex:none;background:linear-gradient(#f6f6f6 98%,#1f7a3f 98%)}
app-header{margin-top:-1px}ribbon-bar{flex:none;margin-top:1px}main{flex:1;display:flex;min-height:0;margin-top:28px}
sheet-list-dialog{position:absolute;left:498px;top:251px;box-shadow:0 0 1px #777}
.cur{position:absolute;left:642px;top:516px}
.wm{position:absolute;right:43px;top:656px;font:800 27px/36px "Open Sans","Noto Sans",sans-serif;color:rgba(70,70,70,.8);pointer-events:none}.wm span{font-weight:300}`,`
<div class="win"><app-header></app-header><ribbon-bar></ribbon-bar><main><properties-palette></properties-palette><drawing-view></drawing-view><project-browser></project-browser></main><status-bar></status-bar></div><div class="desk"></div>
<sheet-list-dialog></sheet-list-dialog>${ic('cursor','class="cur"')}<div class="wm">huytraining<span>.com</span></div>`);
</script>
</body>
</html>
